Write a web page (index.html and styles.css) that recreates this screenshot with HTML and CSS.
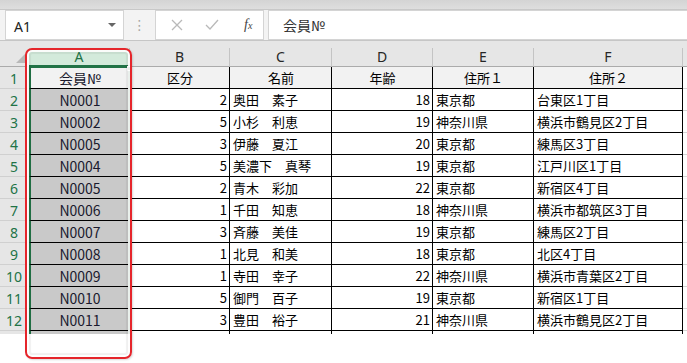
FILE: index.html
```html
<!DOCTYPE html>
<html lang="ja">
<head>
    <meta charset="UTF-8">
    <title>会員一覧</title>
    <link rel="stylesheet" href="styles.css">
</head>
<body>
    <div class="app">
        <div class="top-strip"></div>
        <div class="formula-bar">
            <div class="name-box">
                <span>A1</span>
                <span class="caret"></span>
            </div>
            <div class="grip">⋮</div>
            <div class="fx-buttons">
                <svg width="14" height="14" viewBox="0 0 14 14"><path d="M2 2 L12 12 M12 2 L2 12" stroke="#b9b9b9" stroke-width="1.3" fill="none"/></svg>
                <svg width="16" height="14" viewBox="0 0 16 14"><path d="M2 7 L6 11 L14 2" stroke="#b9b9b9" stroke-width="1.3" fill="none"/></svg>
                <span class="fx">f<small>x</small></span>
            </div>
            <div class="formula-input">会員№</div>
        </div>
        <div class="gap"></div>

        <div class="sheet">
            <div class="corner"><span class="tri"></span></div>
            <div class="col-head col-a">A</div>
            <div class="col-head">B</div>
            <div class="col-head">C</div>
            <div class="col-head">D</div>
            <div class="col-head">E</div>
            <div class="col-head">F</div>
            <div class="col-head col-g"></div>

            <div class="row-head">1</div>
            <div class="cell a active">会員№<span class="handle"></span></div>
            <div class="cell title">区分</div>
            <div class="cell title">名前</div>
            <div class="cell title">年齢</div>
            <div class="cell title">住所１</div>
            <div class="cell title">住所２</div>
            <div class="cell g"></div>

            <div class="row-head">2</div>
            <div class="cell a">N0001</div>
            <div class="cell num">2</div>
            <div class="cell">奥田　素子</div>
            <div class="cell num">18</div>
            <div class="cell">東京都</div>
            <div class="cell">台東区1丁目</div>
            <div class="cell g"></div>

            <div class="row-head">3</div>
            <div class="cell a">N0002</div>
            <div class="cell num">5</div>
            <div class="cell">小杉　利恵</div>
            <div class="cell num">19</div>
            <div class="cell">神奈川県</div>
            <div class="cell">横浜市鶴見区2丁目</div>
            <div class="cell g"></div>

            <div class="row-head">4</div>
            <div class="cell a">N0005</div>
            <div class="cell num">3</div>
            <div class="cell">伊藤　夏江</div>
            <div class="cell num">20</div>
            <div class="cell">東京都</div>
            <div class="cell">練馬区3丁目</div>
            <div class="cell g"></div>

            <div class="row-head">5</div>
            <div class="cell a">N0004</div>
            <div class="cell num">5</div>
            <div class="cell">美濃下　真琴</div>
            <div class="cell num">19</div>
            <div class="cell">東京都</div>
            <div class="cell">江戸川区1丁目</div>
            <div class="cell g"></div>

            <div class="row-head">6</div>
            <div class="cell a">N0005</div>
            <div class="cell num">2</div>
            <div class="cell">青木　彩加</div>
            <div class="cell num">22</div>
            <div class="cell">東京都</div>
            <div class="cell">新宿区4丁目</div>
            <div class="cell g"></div>

            <div class="row-head">7</div>
            <div class="cell a">N0006</div>
            <div class="cell num">1</div>
            <div class="cell">千田　知恵</div>
            <div class="cell num">18</div>
            <div class="cell">神奈川県</div>
            <div class="cell">横浜市都筑区3丁目</div>
            <div class="cell g"></div>

            <div class="row-head">8</div>
            <div class="cell a">N0007</div>
            <div class="cell num">3</div>
            <div class="cell">斉藤　美佳</div>
            <div class="cell num">19</div>
            <div class="cell">東京都</div>
            <div class="cell">練馬区2丁目</div>
            <div class="cell g"></div>

            <div class="row-head">9</div>
            <div class="cell a">N0008</div>
            <div class="cell num">1</div>
            <div class="cell">北見　和美</div>
            <div class="cell num">18</div>
            <div class="cell">東京都</div>
            <div class="cell">北区4丁目</div>
            <div class="cell g"></div>

            <div class="row-head">10</div>
            <div class="cell a">N0009</div>
            <div class="cell num">1</div>
            <div class="cell">寺田　幸子</div>
            <div class="cell num">22</div>
            <div class="cell">神奈川県</div>
            <div class="cell">横浜市青葉区2丁目</div>
            <div class="cell g"></div>

            <div class="row-head">11</div>
            <div class="cell a">N0010</div>
            <div class="cell num">5</div>
            <div class="cell">御門　百子</div>
            <div class="cell num">19</div>
            <div class="cell">東京都</div>
            <div class="cell">新宿区1丁目</div>
            <div class="cell g"></div>

            <div class="row-head">12</div>
            <div class="cell a">N0011</div>
            <div class="cell num">3</div>
            <div class="cell">豊田　裕子</div>
            <div class="cell num">21</div>
            <div class="cell">神奈川県</div>
            <div class="cell">横浜市鶴見区2丁目</div>
            <div class="cell g"></div>

            <div class="row-head"></div>
            <div class="cell a"></div>
            <div class="cell"></div>
            <div class="cell"></div>
            <div class="cell"></div>
            <div class="cell"></div>
            <div class="cell"></div>
            <div class="cell g"></div>
        </div>

        <div class="callout"></div>
    </div>
</body>
</html>
```

FILE: styles.css
```css
* {
    margin: 0;
    padding: 0;
    box-sizing: border-box;
}

body {
    background-color: #ffffff;
    font-family: 'Noto Sans CJK JP', sans-serif;
    color: #000000;
}

.app {
    position: relative;
    width: 687px;
    height: 363px;
    overflow: hidden;
}

.top-strip {
    height: 10px;
    background: linear-gradient(#d4d4d4, #dedede);
    border-bottom: 1px solid #c8c8c8;
}

/* formula bar */
.formula-bar {
    display: flex;
    align-items: center;
    height: 31px;
    padding-left: 5px;
    background-color: #f3f3f3;
    border-bottom: 1px solid #c6c6c6;
}

.name-box {
    display: flex;
    align-items: center;
    justify-content: space-between;
    width: 119px;
    height: 30px;
    margin-top: -1px;
    padding: 0 7px 0 8px;
    background-color: #ffffff;
    border: 1px solid #d4d4d4;
    font-family: 'Noto Sans', sans-serif;
    font-size: 14px;
    color: #222222;
}

.name-box span:first-child {
    padding-top: 3px;
}

.caret {
    width: 0;
    height: 0;
    border-left: 4px solid transparent;
    border-right: 4px solid transparent;
    border-top: 4px solid #666666;
}

.grip {
    width: 31px;
    text-align: center;
    color: #a8a8a8;
    font-size: 14px;
    font-family: 'DejaVu Sans', sans-serif;
}

.fx-buttons {
    display: flex;
    align-items: center;
    gap: 20px;
    width: 109px;
    height: 30px;
    margin-top: -1px;
    padding-left: 14px;
    background-color: #ffffff;
    border: 1px solid #d4d4d4;
}

.fx {
    font-family: 'Liberation Serif', serif;
    font-style: italic;
    font-size: 14px;
    color: #444444;
    margin-left: 4px;
}

.fx small {
    font-size: 10px;
}

.formula-input {
    flex: 1;
    height: 30px;
    margin-top: -1px;
    margin-left: 4px;
    padding: 4px 0 0 14px;
    background-color: #ffffff;
    border: 1px solid #d4d4d4;
    border-right: none;
    font-size: 14px;
    color: #333333;
}

.gap {
    height: 7px;
    background-color: #e6e6e6;
}

/* sheet grid */
.sheet {
    display: grid;
    grid-template-columns: 29px 101px 100px 102px 101px 101px 149px 1fr;
    grid-template-rows: 19px repeat(13, 22px);
    height: 286px;
    overflow: hidden;
    background-color: #ffffff;
}

.corner {
    position: relative;
    background-color: #e6e6e6;
    border-bottom: 1px solid #ababab;
}

.tri {
    position: absolute;
    right: 3px;
    bottom: 3px;
    width: 0;
    height: 0;
    border-left: 10px solid transparent;
    border-bottom: 10px solid #b8b8b8;
}

.col-head {
    display: flex;
    align-items: flex-end;
    justify-content: center;
    background-color: #e6e6e6;
    border-right: 1px solid #c4c4c4;
    border-bottom: 1px solid #ababab;
    font-family: 'Noto Sans', sans-serif;
    font-size: 14px;
    line-height: 18px;
    color: #262626;
}

.col-head.col-a {
    background-color: #d3eadb;
    color: #217346;
    border-bottom: 2px solid #217346;
    line-height: 17px;
}

.col-head.col-g {
    border-right: none;
}

.row-head {
    display: flex;
    align-items: flex-end;
    justify-content: center;
    background-color: #e6e6e6;
    border-bottom: 1px solid #d0d0d0;
    border-right: 1px solid #ababab;
    font-family: 'Noto Sans', sans-serif;
    font-size: 14px;
    line-height: 19px;
    color: #217346;
}

.cell {
    position: relative;
    display: flex;
    align-items: flex-end;
    padding: 0 2px 1px 3px;
    border-right: 1px solid #000000;
    border-bottom: 1px solid #000000;
    font-size: 13px;
    line-height: 18px;
    white-space: nowrap;
    overflow: hidden;
}

.cell.num {
    justify-content: flex-end;
}

.cell.title {
    justify-content: center;
    background-color: #f2f2f2;
}

.cell.a {
    justify-content: center;
    background-color: #c9c9c9;
    border-left: 2px solid #217346;
    border-right: 2px solid #217346;
    font-size: 14px;
    color: #1a1a2e;
}

.cell.a.active {
    background-color: #f2f2f2;
    border-top: 1px solid #217346;
    overflow: visible;
}

.handle {
    position: absolute;
    top: -2px;
    right: -4px;
    width: 5px;
    height: 5px;
    background-color: #217346;
    border: 1px solid #ffffff;
}

.cell.g {
    border-right: none;
    border-bottom: 1px solid #d4d4d4;
}

/* red highlight round column A */
.callout {
    position: absolute;
    left: 25px;
    top: 48px;
    width: 107px;
    height: 311px;
    border: 2px solid #e5252b;
    border-radius: 7px;
    box-shadow: inset 0 0 0 2px rgba(255, 255, 255, 0.9), inset 0 0 1px 4px rgba(0, 0, 0, 0.06), 1px 1px 2px rgba(0, 0, 0, 0.15);
}
```
